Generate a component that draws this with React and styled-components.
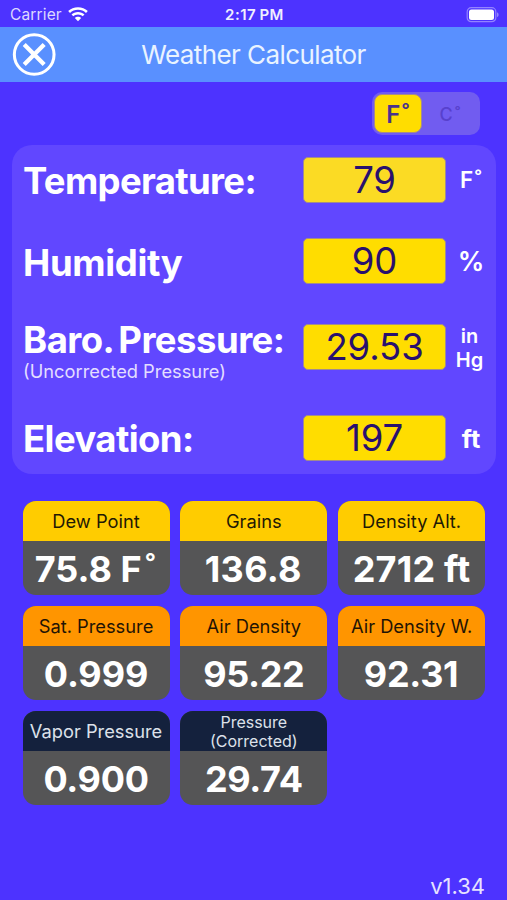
import React, { useState } from 'react';
import styled, { createGlobalStyle } from 'styled-components';

const GlobalStyle = createGlobalStyle`
  * { box-sizing: border-box; }
  body { margin: 0; background: #4d33ff; }
`;

const Screen = styled.div`
  width: 507px;
  height: 900px;
  display: flex;
  flex-direction: column;
  overflow: hidden;
  background: #4d33ff;
  color: #fff;
  font-family: Inter, "Liberation Sans", sans-serif;
`;

const StatusBar = styled.div`
  height: 27px;
  flex: none;
  display: grid;
  grid-template-columns: 1fr auto 1fr;
  align-items: center;
  padding: 2px 8px 0 10px;
  font-size: 15px;
`;

const Carrier = styled.div`
  display: flex;
  align-items: center;
  gap: 6.5px;
  color: #dcd8ff;
  font-size: 15.5px;
  letter-spacing: 0.15px;
`;

const Clock = styled.div`
  font-weight: 600;
  color: #f1efff;
  letter-spacing: 0.5px;
  word-spacing: -1px;
`;

const Battery = styled.svg`
  justify-self: end;
`;

const Header = styled.header`
  height: 54.5px;
  flex: none;
  display: grid;
  grid-template-columns: 44px 1fr 44px;
  align-items: center;
  padding: 0 12px;
  background: #5990ff;
`;

const CloseButton = styled.button`
  display: flex;
  padding: 0;
  border: 0;
  background: none;
`;

const Title = styled.h1`
  margin: 0;
  font-size: 26px;
  font-weight: 400;
  text-align: center;
  letter-spacing: -0.58px;
  color: #e9f3ff;
`;

const UnitSwitch = styled.div`
  align-self: flex-end;
  flex: none;
  width: 108px;
  height: 43px;
  margin: 10.5px 27px 0 0;
  padding: 2px;
  display: grid;
  grid-template-columns: 48px 1fr;
  border-radius: 10px;
  background: #715cf0;
`;

const UnitOption = styled.button`
  padding: 2px 0 0;
  border: ${(p) => (p.$active ? '1px solid #a48a90' : '0')};
  border-radius: 8px;
  background: ${(p) => (p.$active ? '#ffdd00' : 'transparent')};
  color: ${(p) => (p.$active ? '#49328c' : '#5841cd')};
  font-family: inherit;
  font-size: ${(p) => (p.$active ? 24 : 18)}px;
  font-weight: ${(p) => (p.$active ? 600 : 500)};
  line-height: 1;
`;

const Ring = styled.span`
  margin-left: ${(p) => p.$gap}px;
`;

const Panel = styled.section`
  flex: none;
  height: 328.5px;
  margin: 10px 11px 0 12px;
  padding: 12px 0 0 11px;
  border-radius: 20px;
  background: #6147ff;
`;

const Field = styled.div`
  height: 46px;
  margin-bottom: ${(p) => p.$after || 0}px;
  display: grid;
  grid-template-columns: 280px 143px 50px;
  grid-template-rows: 46px;
  align-items: center;
`;

const FieldLabel = styled.div`
  font-size: 36.5px;
  font-weight: 700;
  line-height: 44px;
  white-space: nowrap;
  letter-spacing: ${(p) => p.$spacing}px;
  word-spacing: -3px;
  padding-top: ${(p) => p.$drop || 0}px;
`;

const FieldNote = styled.div`
  font-size: 18.3px;
  font-weight: 400;
  line-height: 18px;
  color: #e3deff;
`;

const Value = styled.input`
  width: 143px;
  height: 46px;
  padding: 0;
  border: 1px solid #a18b8e;
  border-radius: 5px;
  background: ${(p) => (p.$focused ? '#fbdb24' : '#ffdd00')};
  color: #29106e;
  font-family: inherit;
  font-size: 36.5px;
  font-weight: 370;
  letter-spacing: -0.1px;
  text-align: center;
  outline: none;
`;

const Unit = styled.div`
  font-size: ${(p) => p.$size}px;
  font-weight: ${(p) => p.$weight || 600};
  line-height: 24px;
  padding-top: ${(p) => p.$drop || 0}px;
  padding-right: ${(p) => p.$inset || 0}px;
  text-align: center;
  white-space: pre-line;
`;

const Results = styled.section`
  flex: none;
  display: grid;
  grid-template-columns: repeat(3, 147px);
  grid-auto-rows: 94.5px;
  gap: 10.7px 10.8px;
  margin: 27px 0 0 22.5px;
`;

const Card = styled.article`
  display: flex;
  flex-direction: column;
  border-radius: 13px;
  overflow: hidden;
  background: #555556;
`;

const tones = {
  yellow: ['#ffcc00', '#1f1a05'],
  orange: ['#ff9500', '#1f1405'],
  navy: ['#14213d', '#dde1ea'],
};

const CardHeader = styled.div`
  height: 40.5px;
  display: flex;
  align-items: center;
  justify-content: center;
  padding-top: 1px;
  text-align: center;
  white-space: pre-line;
  background: ${(p) => tones[p.$tone][0]};
  color: ${(p) => tones[p.$tone][1]};
  font-size: ${(p) => (p.$small ? 16 : 18.3)}px;
  line-height: 19px;
`;

const CardValue = styled.div`
  flex: 1;
  display: flex;
  align-items: center;
  justify-content: center;
  padding: 2px ${(p) => p.$inset || 0}px 0 0;
  font-size: 36px;
  font-weight: 650;
  white-space: pre;
  letter-spacing: ${(p) => p.$spacing || 0}px;
`;

const CardDegree = styled.span`
  align-self: flex-start;
  margin: 6.5px 0 0 3px;
  font-size: 32px;
  line-height: 1.2;
`;

const Version = styled.footer`
  margin: auto 22px 2px 0;
  align-self: flex-end;
  font-size: 22px;
  line-height: 24px;
  color: #e6e2ff;
`;

const WifiIcon = () => (
  <svg width="20" height="15" viewBox="0 0 20 15" fill="#fff">
    <path d="M10 0.2C13.8 0.2 17.3 1.7 19.8 4.1L18 5.9C15.9 3.9 13.1 2.8 10 2.8S4.1 3.9 2 5.9L0.2 4.1C2.7 1.7 6.2 0.2 10 0.2Z" />
    <path d="M10 5C12.5 5 14.8 6 16.5 7.5L14.7 9.3C13.5 8.2 11.8 7.5 10 7.5S6.5 8.2 5.3 9.3L3.5 7.5C5.2 6 7.5 5 10 5Z" />
    <path d="M10 9.7C11.2 9.7 12.4 10.2 13.2 10.9L10 14.3L6.8 10.9C7.6 10.2 8.8 9.7 10 9.7Z" />
  </svg>
);

const fields = [
  { label: 'Temperature:', spacing: -0.66, value: '79', unit: 'F', ring: true, size: 22.5, after: 35, focused: true, labelDrop: 1 },
  { label: 'Humidity', spacing: -0.35, value: '90', unit: '%', size: 26.5, after: 40, labelDrop: 3 },
  { label: 'Baro. Pressure:', spacing: -0.52, note: '(Uncorrected Pressure)', value: '29.53', unit: 'in\nHg', size: 20, after: 44.5, labelDrop: 4, drop: 2, inset: 3 },
  { label: 'Elevation:', spacing: -0.58, value: '197', unit: 'ft', size: 25.5, weight: 700, labelDrop: 3, drop: 2 },
];

const results = [
  { name: 'Dew Point', value: '75.8 F', ring: true, tone: 'yellow', spacing: 0, inset: 1 },
  { name: 'Grains', value: '136.8', tone: 'yellow', spacing: 0.3, inset: 1 },
  { name: 'Density Alt.', value: '2712 ft', tone: 'yellow', spacing: 0.2 },
  { name: 'Sat. Pressure', value: '0.999', tone: 'orange', spacing: -0.1 },
  { name: 'Air Density', value: '95.22', tone: 'orange', spacing: -0.4 },
  { name: 'Air Density W.', value: '92.31', tone: 'orange', spacing: -0.3, inset: 1 },
  { name: 'Vapor Pressure', value: '0.900', tone: 'navy', spacing: -0.3 },
  { name: 'Pressure\n(Corrected)', value: '29.74', tone: 'navy', small: true, spacing: -0.3 },
];

export default function App() {
  const [unit, setUnit] = useState('F');
  return (
    <Screen>
      <GlobalStyle />
      <StatusBar>
        <Carrier>Carrier<WifiIcon /></Carrier>
        <Clock>2:17 PM</Clock>
        <Battery width="33" height="16" viewBox="0 0 33 16">
          <rect x="1.2" y="0.7" width="28.6" height="14" rx="4" fill="none" stroke="#9384ff" strokeWidth="1.2" />
          <rect x="3" y="2.5" width="25" height="10.4" rx="2.5" fill="#fff" />
          <path d="M31 5.3v4.8c1-.4 1.6-1.3 1.6-2.4s-.6-2-1.6-2.4z" fill="#9384ff" />
        </Battery>
      </StatusBar>
      <Header>
        <CloseButton aria-label="Close">
          <svg width="45" height="45" viewBox="0 0 45 45" fill="none" stroke="#fff">
            <circle cx="22.7" cy="22.5" r="20.3" strokeWidth="3.1" />
            <path d="M12.5 12.3L32.9 32.7M32.9 12.3L12.5 32.7" strokeWidth="4.4" />
          </svg>
        </CloseButton>
        <Title>Weather Calculator</Title>
      </Header>
      <UnitSwitch>
        <UnitOption $active={unit === 'F'} onClick={() => setUnit('F')}>F<Ring $gap={1}>˚</Ring></UnitOption>
        <UnitOption $active={unit === 'C'} onClick={() => setUnit('C')}>C<Ring $gap={2}>˚</Ring></UnitOption>
      </UnitSwitch>
      <Panel>
        {fields.map((f) => (
          <Field key={f.label} $after={f.after}>
            <div>
              <FieldLabel $drop={f.labelDrop} $spacing={f.spacing}>{f.label}</FieldLabel>
              {f.note && <FieldNote>{f.note}</FieldNote>}
            </div>
            <Value defaultValue={f.value} $focused={f.focused} />
            <Unit $size={f.size} $weight={f.weight} $drop={f.drop} $inset={f.inset}>
              {f.unit}
              {f.ring && <Ring $gap={1}>˚</Ring>}
            </Unit>
          </Field>
        ))}
      </Panel>
      <Results>
        {results.map((r) => (
          <Card key={r.name}>
            <CardHeader $tone={r.tone} $small={r.small}>{r.name}</CardHeader>
            <CardValue $spacing={r.spacing} $inset={r.inset}>
              {r.value}
              {r.ring && <CardDegree>˚</CardDegree>}
            </CardValue>
          </Card>
        ))}
      </Results>
      <Version>v1.34</Version>
    </Screen>
  );
}
